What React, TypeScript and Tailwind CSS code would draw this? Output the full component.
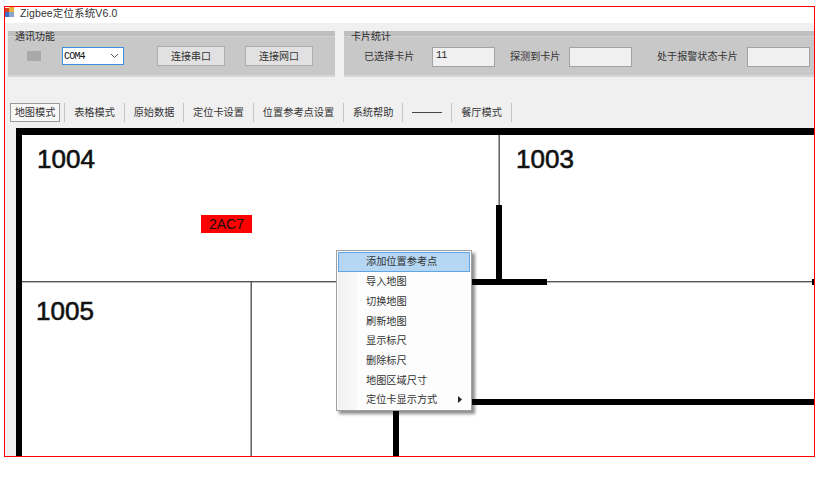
const cjk = "font-['Liberation_Sans','Noto_Sans_CJK_SC',sans-serif]";

function GroupBox({ title, className, children }: { title: string; className: string; children: React.ReactNode }) {
  return (
    <section className={`relative h-[46px] bg-[#c8c8c8] border-b-2 border-[#d6d6d6] ${className}`}>
      <div className="h-[6px] bg-[#bfbfbf] border-b border-[#d2d2d2]" />
      <span className="absolute left-[7px] top-0 text-[10px] leading-[12px] text-[#2c2c2c]">{title}</span>
      {children}
    </section>
  );
}

function Box({ value = "" }: { value?: string }) {
  return (
    <div className="w-[63px] h-[20px] bg-[#f0f0f0] border border-[#a3a3a3] pl-[3px] text-[10px] leading-[16px] tracking-[-0.8px] font-['Liberation_Mono',monospace] text-[#222]">
      {value}
    </div>
  );
}

const tools = [
  { t: "表格模式", w: "w-[60px]" },
  { t: "原始数据", w: "w-[59px]" },
  { t: "定位卡设置", w: "w-[70px]" },
  { t: "位置参考点设置", w: "w-[90px]" },
  { t: "系统帮助", w: "w-[59px]" },
];

const menu = ["导入地图", "切换地图", "刷新地图", "显示标尺", "删除标尺", "地图区域尺寸", "定位卡显示方式"];

const roomLabel = "absolute text-[26px] leading-[30px] font-normal text-[#111] [-webkit-text-stroke:0.6px_#111] font-['Liberation_Sans',sans-serif]";

export default function App() {
  return (
    <div className={`w-[821px] h-[487px] bg-white pl-[4px] pt-[6px] overflow-hidden ${cjk}`}>
      <div className="w-[811px] h-[451px] border border-[#ff0000] bg-[#f0f0f0] flex flex-col overflow-hidden">
        {/* title bar */}
        <header className="h-[16px] shrink-0 bg-white flex items-start">
          <svg width="10" height="11" viewBox="0 0 10 11" className="shrink-0">
            <rect x="0" y="1" width="4" height="4" fill="#d8402a" />
            <rect x="4" y="0" width="5" height="5" fill="#e8b23a" />
            <rect x="0" y="5" width="4" height="5" fill="#3b6fc4" />
            <rect x="4" y="5" width="5" height="5" fill="#8aa6cf" />
          </svg>
          <span className="ml-[5px] text-[10.5px] leading-[12px] text-[#333] tracking-[0.12px] whitespace-nowrap">Zigbee定位系统V6.0</span>
        </header>

        {/* group boxes */}
        <div className="flex pl-[3px] mt-[8px] shrink-0">
          <GroupBox title="通讯功能" className="w-[327px] mr-[9px]">
            <div className="flex items-center h-[40px] pl-[19px] pb-[2px]">
              <div className="w-[14px] h-[10px] bg-[#a8a8a8]" />
              <div className="ml-[21px] w-[62px] h-[18px] bg-white border border-[#3f8fdc] flex items-center justify-between pl-[1px] pr-[4px]">
                <span className="text-[10px] font-['Liberation_Mono',monospace] text-[#111] tracking-[-0.8px]">COM4</span>
                <svg width="9" height="6" viewBox="0 0 9 6"><path d="M1 1l3.5 3.5L8 1" fill="none" stroke="#555" strokeWidth="1" /></svg>
              </div>
              <button className="ml-[33px] w-[68px] h-[20px] bg-[#e1e1e1] border border-[#adadad] text-[10px] text-[#333]">连接串口</button>
              <button className="ml-[20px] w-[68px] h-[20px] bg-[#e1e1e1] border border-[#adadad] text-[10px] text-[#333]">连接网口</button>
            </div>
          </GroupBox>
          <GroupBox title="卡片统计" className="flex-1">
            <div className="flex items-center h-[40px] pb-[1px] text-[10.1px] text-[#333]">
              <span className="ml-[20px] w-[68px] whitespace-nowrap">已选择卡片</span>
              <Box value="11" />
              <span className="ml-[15px] w-[59px] whitespace-nowrap">探测到卡片</span>
              <Box />
              <span className="ml-[25px] w-[90px] whitespace-nowrap">处于报警状态卡片</span>
              <Box />
            </div>
          </GroupBox>
        </div>

        {/* toolbar */}
        <nav className="flex items-center h-[19px] mt-[26px] ml-[5px] shrink-0 text-[10.2px] text-[#333]">
          <div className="w-[50px] h-[19px] flex items-center justify-center bg-[#f7f7f7] border border-[#9a9a9a]">地图模式</div>
          <div className="w-[4px]" />
          {tools.map((x) => (
            <div key={x.t} className={`flex items-center justify-center h-[19px] border-l border-[#c4c4c4] ${x.w}`}>{x.t}</div>
          ))}
          <div className="flex items-center justify-center h-[19px] border-l border-[#c4c4c4] w-[49px]">
            <div className="w-[30px] h-px bg-[#444]" />
          </div>
          <div className="flex items-center justify-center h-[19px] border-l border-r border-[#c4c4c4] w-[61px]">餐厅模式</div>
        </nav>

        {/* map canvas */}
        <main className="relative mt-[6px] ml-[11px] flex-1 bg-white overflow-visible">
          <svg className="absolute left-0 top-0" width="798" height="328" viewBox="0 0 798 328">
            <rect x="0" y="0" width="798" height="7" fill="#000" />
            <rect x="0" y="0" width="6" height="328" fill="#000" />
            <rect x="6" y="153" width="792" height="1.4" fill="#555" />
            <rect x="234.5" y="154" width="1.4" height="174" fill="#555" />
            <rect x="482.5" y="7" width="1.4" height="71" fill="#555" />
            <rect x="480" y="77" width="6" height="74" fill="#000" />
            <rect x="450" y="151" width="81" height="6" fill="#000" />
            <rect x="796" y="151" width="2" height="6" fill="#000" />
            <rect x="377" y="271" width="421" height="6" fill="#000" />
            <rect x="377" y="270" width="6" height="58" fill="#000" />
          </svg>
          <span className={`${roomLabel} left-[21px] top-[16px]`}>1004</span>
          <span className={`${roomLabel} left-[500px] top-[16px]`}>1003</span>
          <span className={`${roomLabel} left-[20px] top-[168px]`}>1005</span>
          <div className="absolute left-[185px] top-[87px] w-[51px] h-[18px] bg-[#ff0000] text-[14px] leading-[18px] text-center text-[#111] font-['Liberation_Sans',sans-serif]">2AC7</div>

          {/* context menu */}
          <div className="absolute left-[320px] top-[122px] w-[136px] h-[161px] bg-[#fdfdfd] border border-[#a0a0a0] shadow-[3px_3px_3px_rgba(0,0,0,0.45)] p-px flex flex-col text-[10.2px] text-[#333]">
            <div className="h-[20px] shrink-0 bg-[#b5d7f3] border border-[#62a5e6] flex items-center pl-[27px]">添加位置参考点</div>
            {menu.map((m, i) => (
              <div key={m} className="h-[19.7px] shrink-0 flex items-center">
                <div className="w-[19px] h-full bg-gradient-to-r from-[#f1f1f1] to-[#f8f8f8]" />
                <span className="ml-[9px] flex-1">{m}</span>
                {i === 6 && (
                  <svg width="4" height="7" viewBox="0 0 4 7" className="mr-[8px]"><path d="M0 0l4 3.5L0 7z" fill="#222" /></svg>
                )}
              </div>
            ))}
          </div>
        </main>
      </div>
    </div>
  );
}
